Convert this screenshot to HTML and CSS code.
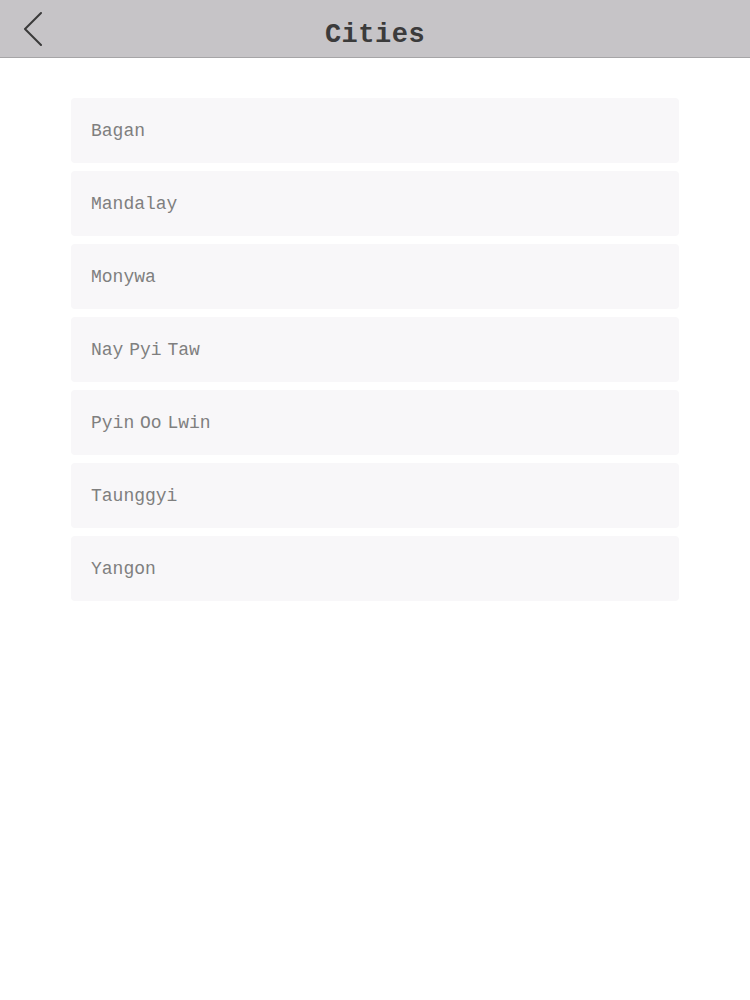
FILE: index.html
```html
<!DOCTYPE html>
<html>
<head>
    <link rel="stylesheet" href="styles.css">
</head>
<body>
    <header class="top-bar">
        <button class="back-button" aria-label="Back">
            <svg width="22" height="36" viewBox="0 0 22 36">
                <polyline points="19,3 3,19 19,35" fill="none" stroke="#3a3a3a" stroke-width="2" stroke-linecap="round" stroke-linejoin="round"/>
            </svg>
        </button>
        <h1 class="title">Cities</h1>
    </header>
    <main>
        <ul class="city-list">
            <li class="city">Bagan</li>
            <li class="city">Mandalay</li>
            <li class="city">Monywa</li>
            <li class="city">Nay Pyi Taw</li>
            <li class="city">Pyin Oo Lwin</li>
            <li class="city">Taunggyi</li>
            <li class="city">Yangon</li>
        </ul>
    </main>
</body>
</html>
```

FILE: styles.css
```css
body {
    margin: 0;
    padding: 0;
    background-color: #fff;
    font-family: "Liberation Mono", "Courier New", monospace;
}

.top-bar {
    position: relative;
    height: 57px;
    background-color: #c6c4c7;
    border-bottom: 1px solid #a6a5a7;
    display: flex;
    align-items: center;
    justify-content: center;
}

.back-button {
    position: absolute;
    left: 22px;
    top: 10px;
    padding: 0;
    border: none;
    background: none;
    cursor: pointer;
}

.back-button svg {
    display: block;
}

.title {
    margin: 12px 0 0 0;
    font-size: 27px;
    font-weight: bold;
    color: #3b3b3b;
    letter-spacing: 0.5px;
}

.city-list {
    list-style: none;
    margin: 0 auto;
    padding: 40px 0;
    width: 608px;
    display: flex;
    flex-direction: column;
    gap: 8px;
}

.city {
    height: 65px;
    padding: 0 20px;
    display: flex;
    align-items: center;
    background-color: #f8f7f9;
    border-radius: 4px;
    font-size: 18px;
    color: #7f7f7f;
    word-spacing: -5px;
}
```
